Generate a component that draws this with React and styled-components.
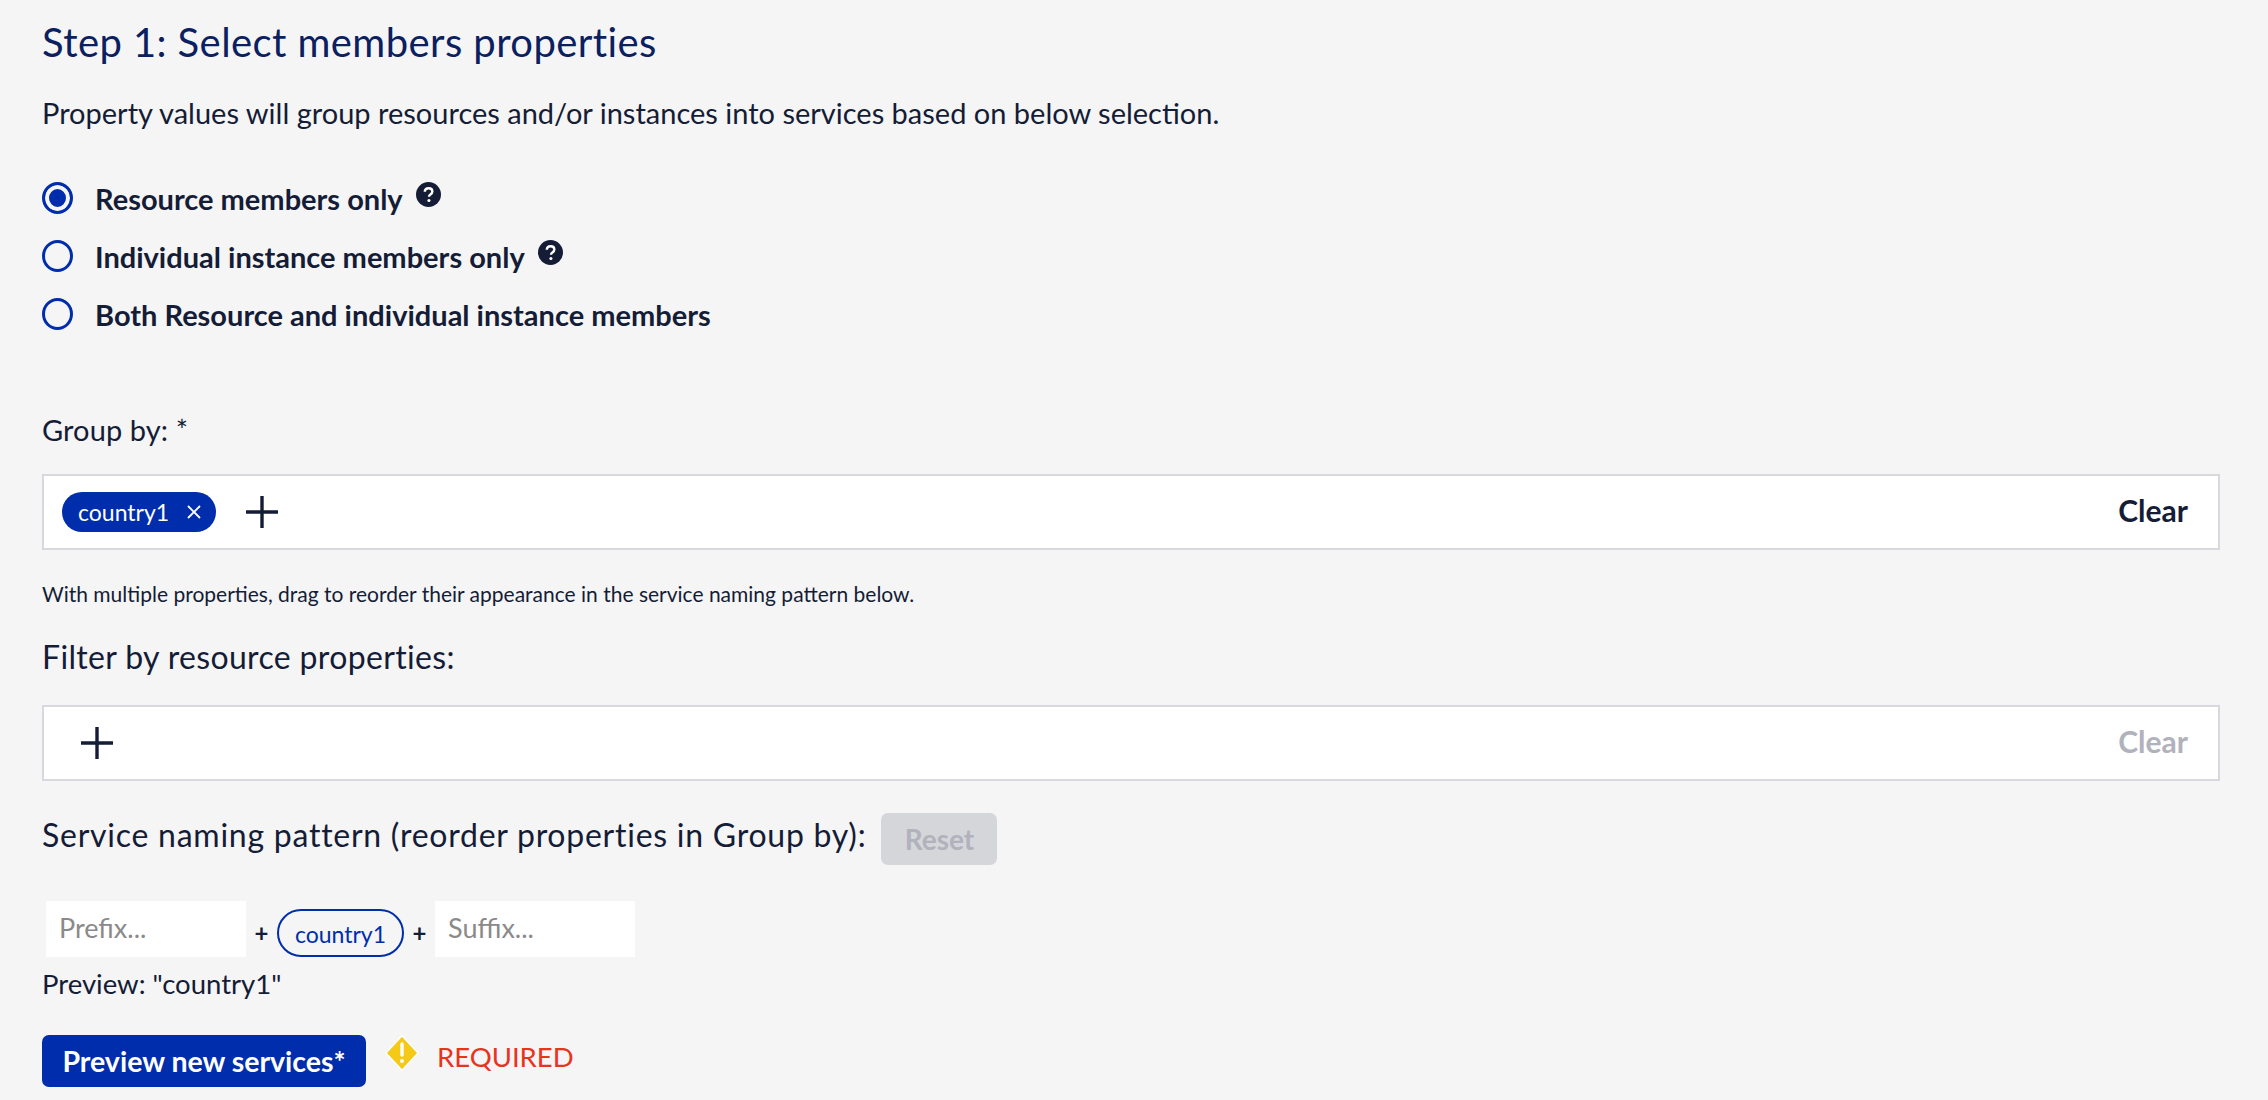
import React from 'react';
import styled, { createGlobalStyle } from 'styled-components';

const colors = {
    page: '#f5f5f5',
    text: '#141c36',
    heading: '#0a2060',
    blue: '#002dab',
    line: '#d8d8de',
    muted: '#b1b2bb',
    red: '#e8331d',
};

const GlobalStyle = createGlobalStyle`
    html, body {
        margin: 0;
        height: 100%;
        background: ${colors.page};
    }
    body {
        font-family: 'Lato', 'Liberation Sans', sans-serif;
        color: ${colors.text};
        overflow: hidden;
    }
`;

const Page = styled.div`
    padding: 22px 48px 0 42px;
`;

const Title = styled.h1`
    margin: 0;
    font-size: 40px;
    line-height: 40px;
    font-weight: 400;
    letter-spacing: 0.42px;
    color: ${colors.heading};
`;

const Description = styled.p`
    margin: 33px 0 0;
    font-size: 29px;
    line-height: 36px;
`;

const RadioGroup = styled.div`
    display: flex;
    flex-direction: column;
    gap: 26px;
    margin-top: 51px;
`;

const RadioRow = styled.label`
    display: flex;
    align-items: center;
    height: 32px;
    font-size: 29px;
    font-weight: 700;
`;

const RadioMark = styled.span`
    box-sizing: border-box;
    flex: none;
    width: 31px;
    height: 32px;
    margin-right: 22px;
    border: 3px solid ${colors.blue};
    border-radius: 50%;
    background: ${props => (props.$checked ? colors.blue : 'transparent')};
    box-shadow: ${props => (props.$checked ? `inset 0 0 0 4px ${colors.page}` : 'none')};
`;

const HelpIcon = styled.svg`
    flex: none;
    width: 25px;
    height: 25px;
    margin: -8px 0 0 13px;
`;

const FieldLabel = styled.div`
    margin-top: ${props => props.$top}px;
    font-size: ${props => props.$size}px;
    letter-spacing: ${props => props.$spacing}px;
    line-height: 36px;
`;

const TokenBox = styled.div`
    box-sizing: border-box;
    display: flex;
    align-items: center;
    height: 76px;
    margin-top: ${props => props.$top}px;
    padding: 0 30px 0 18px;
    background: #fff;
    border: 2px solid ${colors.line};
`;

const Chip = styled.span`
    display: inline-flex;
    align-items: center;
    height: 40px;
    padding: 0 15px 0 16px;
    border-radius: 20px;
    background: ${colors.blue};
    color: #fff;
    font-size: 23px;
`;

const ChipClose = styled.svg`
    width: 14px;
    height: 14px;
    margin-left: 18px;
`;

const PlusIcon = styled.svg`
    flex: none;
    width: 34px;
    height: 34px;
    margin-left: ${props => props.$left}px;
`;

const ClearButton = styled.span`
    margin: -5px 0 0 auto;
    font-size: 30px;
    font-weight: 700;
    color: ${props => (props.$disabled ? colors.muted : colors.text)};
`;

const Hint = styled.div`
    margin-top: 30px;
    font-size: 21px;
    line-height: 28px;
`;

const NamingRow = styled.div`
    display: flex;
    align-items: flex-start;
    margin-top: 32px;
`;

const NamingLabel = styled.span`
    font-size: 32px;
    letter-spacing: 0.75px;
    line-height: 44px;
`;

const ResetButton = styled.button`
    width: 116px;
    height: 52px;
    margin-left: 15px;
    padding: 0;
    border: 0;
    border-radius: 7px;
    background: #d5d6da;
    color: ${colors.muted};
    font-family: inherit;
    font-size: 28px;
    font-weight: 700;
`;

const PatternRow = styled.div`
    display: flex;
    align-items: flex-end;
    margin: 36px 0 0 4px;
`;

const AffixInput = styled.input`
    box-sizing: border-box;
    width: 200px;
    height: 56px;
    padding: 0 0 4px 13px;
    border: 0;
    outline: 0;
    background: #fff;
    font-family: inherit;
    font-size: 27px;

    &::placeholder {
        color: #8a8a8a;
        opacity: 1;
    }
`;

const Joiner = styled.span`
    width: ${props => props.$width}px;
    height: 48px;
    font-size: 24px;
    font-weight: 700;
    line-height: 48px;
    text-align: center;
`;

const PatternPill = styled.span`
    box-sizing: border-box;
    width: 127px;
    height: 48px;
    border: 2px solid ${colors.blue};
    border-radius: 24px;
    color: ${colors.blue};
    font-size: 23px;
    line-height: 46px;
    text-align: center;
`;

const PreviewText = styled.div`
    margin-top: 9px;
    font-size: 27.5px;
    line-height: 36px;
`;

const ActionRow = styled.div`
    display: flex;
    align-items: flex-start;
    margin-top: 33px;
`;

const PreviewButton = styled.button`
    width: 324px;
    height: 52px;
    padding: 0;
    border: 0;
    border-radius: 7px;
    background: ${colors.blue};
    color: #fff;
    font-family: inherit;
    font-size: 28.5px;
    font-weight: 700;
`;

const WarningIcon = styled.svg`
    flex: none;
    width: 34px;
    height: 36px;
    margin: 0 0 0 19px;
`;

const RequiredText = styled.span`
    margin-left: 18px;
    color: ${colors.red};
    font-size: 27.5px;
    line-height: 44px;
`;

const Help = () => (
    <HelpIcon viewBox="0 0 24 24">
        <circle cx="12" cy="12" r="12" fill={colors.text} />
        <path
            d="M8.4 9.4c.1-2.2 1.6-3.4 3.7-3.4s3.6 1.2 3.6 3c0 1.5-.8 2.2-1.9 3-.9.6-1.3 1.1-1.3 2.2"
            fill="none"
            stroke="#fff"
            strokeWidth="2.3"
        />
        <circle cx="12.4" cy="17.8" r="1.5" fill="#fff" />
    </HelpIcon>
);

const Plus = ({ left }) => (
    <PlusIcon $left={left} viewBox="0 0 34 34">
        <path d="M17 1v32M1 17h32" stroke={colors.text} strokeWidth="3.4" fill="none" />
    </PlusIcon>
);

const Radio = ({ checked, help, children }) => (
    <RadioRow>
        <RadioMark $checked={checked} />
        {children}
        {help && <Help />}
    </RadioRow>
);

const App = () => (
    <Page>
        <GlobalStyle />
        <Title>Step 1: Select members properties</Title>
        <Description>
            Property values will group resources and/or instances into services based on below selection.
        </Description>
        <RadioGroup>
            <Radio checked help>Resource members only</Radio>
            <Radio help>Individual instance members only</Radio>
            <Radio>Both Resource and individual instance members</Radio>
        </RadioGroup>

        <FieldLabel $top={82} $size={29} $spacing={0.1}>Group by: *</FieldLabel>
        <TokenBox $top={26}>
            <Chip>
                country1
                <ChipClose viewBox="0 0 14 14">
                    <path d="M1 1l12 12M13 1L1 13" stroke="#fff" strokeWidth="1.8" fill="none" />
                </ChipClose>
            </Chip>
            <Plus left={29} />
            <ClearButton>Clear</ClearButton>
        </TokenBox>
        <Hint>With multiple properties, drag to reorder their appearance in the service naming pattern below.</Hint>

        <FieldLabel $top={31} $size={32} $spacing={0.35}>Filter by resource properties:</FieldLabel>
        <TokenBox $top={30}>
            <Plus left={18} />
            <ClearButton $disabled>Clear</ClearButton>
        </TokenBox>

        <NamingRow>
            <NamingLabel>Service naming pattern (reorder properties in Group by):</NamingLabel>
            <ResetButton>Reset</ResetButton>
        </NamingRow>
        <PatternRow>
            <AffixInput placeholder="Prefix..." />
            <Joiner $width={31}>+</Joiner>
            <PatternPill>country1</PatternPill>
            <Joiner $width={31}>+</Joiner>
            <AffixInput placeholder="Suffix..." />
        </PatternRow>
        <PreviewText>Preview: "country1"</PreviewText>

        <ActionRow>
            <PreviewButton>Preview new services*</PreviewButton>
            <WarningIcon viewBox="0 0 34 36">
                <path d="M17 .8l16 17.2-16 17.2L1 18z" fill="#f5c917" stroke="#fff" strokeWidth="1.4" strokeLinejoin="round" />
                <path d="M17 9v11" stroke="#fff" strokeWidth="3.4" strokeLinecap="round" />
                <circle cx="17" cy="26" r="2" fill="#fff" />
            </WarningIcon>
            <RequiredText>REQUIRED</RequiredText>
        </ActionRow>
    </Page>
);

export default App;
